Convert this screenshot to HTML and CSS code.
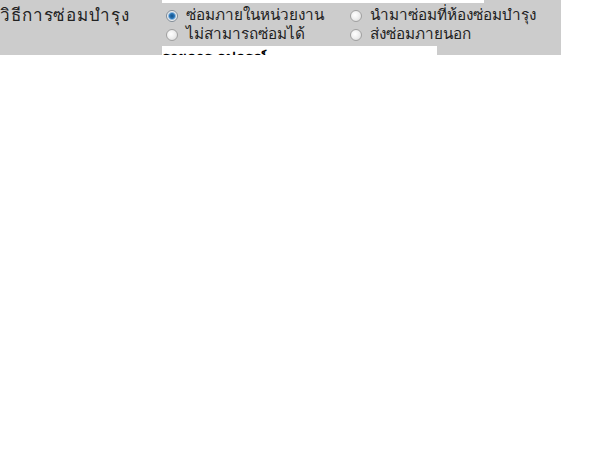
FILE: index.html
```html
<!DOCTYPE html>
<html>
<head>
<meta charset="utf-8">
<link rel="stylesheet" href="styles.css">
</head>
<body>
<div class="panel">
  <div class="top-input"></div>
  <div class="row">
    <div class="label">วิธีการซ่อมบำรุง</div>
    <div class="options">
      <label class="opt"><input type="radio" name="m" checked><span>ซ่อมภายในหน่วยงาน</span></label>
      <label class="opt"><input type="radio" name="m"><span>นำมาซ่อมที่ห้องซ่อมบำรุง</span></label>
      <label class="opt"><input type="radio" name="m"><span>ไม่สามารถซ่อมได้</span></label>
      <label class="opt"><input type="radio" name="m"><span>ส่งซ่อมภายนอก</span></label>
    </div>
  </div>
  <div class="next-input">รายการ อุปกรณ์</div>
</div>
</body>
</html>
```
FILE: styles.css
```css
html, body {
  margin: 0;
  padding: 0;
  background: #ffffff;
}
.panel {
  width: 561px;
  height: 55px;
  overflow: hidden;
  background: #cccccc;
  font-family: Tahoma, "DejaVu Sans", "Noto Sans", sans-serif;
  font-size: 15.3px;
  color: #222222;
}
.top-input {
  margin-left: 162px;
  width: 322px;
  height: 3px;
  background: #ffffff;
}
.row {
  display: grid;
  grid-template-columns: 162px auto;
  padding-top: 3px;
}
.label {
  line-height: 19px;
  font-size: 17px;
  letter-spacing: 0.9px;
}
.options {
  display: grid;
  grid-template-columns: 184px auto;
}
.opt {
  display: flex;
  align-items: center;
  height: 19px;
  line-height: 19px;
}
.opt input {
  appearance: none;
  -webkit-appearance: none;
  width: 12px;
  height: 12px;
  margin: 0 8px 0 4px;
  border-radius: 50%;
  border: 1px solid #a0a0a0;
  background: radial-gradient(circle at 40% 40%, #ffffff 0%, #eeeeee 50%, #d4d4d4 100%);
  box-sizing: border-box;
  flex: none;
}
.opt input:checked {
  background: radial-gradient(circle, #134f86 0, #2a76b8 2.5px, #8fb8dd 3.5px, #f0f0f0 4.5px);
  border-color: #808c98;
}
.next-input {
  margin-left: 162px;
  margin-top: 2px;
  width: 275px;
  height: 20px;
  background: #ffffff;
  font-weight: bold;
  color: #000;
  font-size: 15px;
  line-height: 20px;
  padding-top: 2px;
  box-sizing: border-box;
}
```
